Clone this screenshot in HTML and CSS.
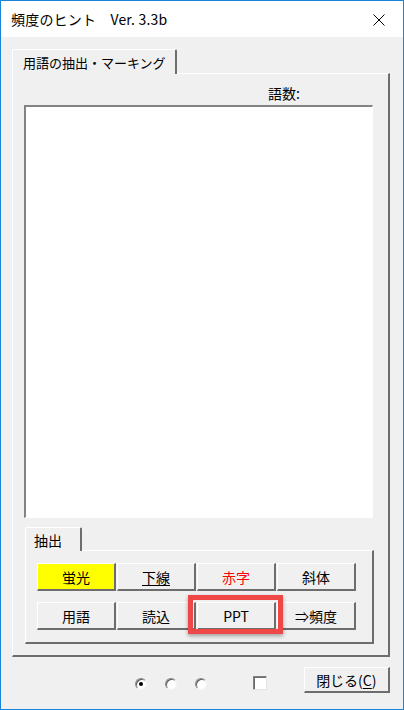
FILE: index.html
```html
<!DOCTYPE html>
<html lang="ja">

<head>
    <meta charset="UTF-8">
    <meta name="viewport" content="width=device-width, initial-scale=1.0">
    <title>頻度のヒント</title>
    <link rel="stylesheet" href="styles.css">
</head>

<body>

    <div class="window">
        <div class="titlebar">
            <span class="title">頻度のヒント　Ver. 3.3b</span>
            <span class="close">
                <svg width="12" height="12" viewBox="0 0 12 12">
                    <path d="M0.5 0.5 L11.5 11.5 M11.5 0.5 L0.5 11.5" stroke="#000" stroke-width="1" fill="none" />
                </svg>
            </span>
        </div>

        <div class="client">
            <div class="tabctl">
                <div class="tabs">
                    <div class="tab tab-main">用語の抽出・マーキング</div>
                </div>
                <div class="panel panel-main">
                    <div class="count">語数:</div>
                    <div class="listbox"></div>

                    <div class="tabctl tabctl-inner">
                        <div class="tabs">
                            <div class="tab tab-sub">抽出</div>
                        </div>
                        <div class="panel panel-sub">
                            <div class="btn-grid">
                                <div class="btn btn-yellow">蛍光</div>
                                <div class="btn"><u>下線</u></div>
                                <div class="btn btn-red">赤字</div>
                                <div class="btn">斜体</div>
                                <div class="btn">用語</div>
                                <div class="btn">読込</div>
                                <div class="btn btn-marked">PPT</div>
                                <div class="btn">⇒頻度</div>
                            </div>
                        </div>
                    </div>
                </div>
            </div>

            <div class="footer">
                <span class="radio checked"></span>
                <span class="radio"></span>
                <span class="radio"></span>
                <span class="checkbox"></span>
                <div class="btn btn-close">閉じる(<u>C</u>)</div>
            </div>
        </div>
    </div>

</body>

</html>
```

FILE: styles.css
```css
/* Base */
body {
    margin: 0;
    padding: 0;
    background: #f0f0f0;
    font-family: "Noto Sans CJK JP", "Noto Sans", sans-serif;
    font-size: 13px;
    color: #000;
}

.window {
    width: 404px;
    height: 710px;
    box-sizing: border-box;
    border: 1px solid #1883d7;
    background: #f0f0f0;
    display: flex;
    flex-direction: column;
}

.titlebar {
    height: 36px;
    background: #fff;
    display: flex;
    align-items: center;
    justify-content: space-between;
    padding: 0 18px 0 10px;
}

.title {
    font-size: 14px;
    letter-spacing: 0.2px;
}

.close {
    display: flex;
    margin-top: 2px;
}

.client {
    flex: 1;
    padding: 12px 13px 0 11px;
    display: flex;
    flex-direction: column;
}

/* Tab controls */
.tabs {
    display: flex;
}

.tab {
    position: relative;
    z-index: 1;
    background: #f0f0f0;
    margin-bottom: -1px;
    border-top: 1px solid #fff;
    border-left: 1px solid #fff;
    border-right: 2px solid #6d6d6d;
    box-sizing: border-box;
    display: flex;
    align-items: center;
    border-radius: 2px 2px 0 0;
}

.tab-main {
    width: 165px;
    height: 25px;
    padding-left: 10px;
}

.tab-sub {
    width: 57px;
    height: 24px;
    padding-left: 8px;
    font-size: 14px;
}

.panel {
    box-sizing: border-box;
    border-top: 1px solid #fff;
    border-left: 1px solid #fff;
    border-right: 2px solid #6d6d6d;
    border-bottom: 2px solid #6d6d6d;
}

.panel-main {
    width: 378px;
    height: 584px;
    padding: 0 15px 0 11px;
}

.count {
    height: 31px;
    box-sizing: border-box;
    padding: 10px 73px 0 0;
    line-height: 18px;
    text-align: right;
    font-size: 14px;
}

.listbox {
    height: 413px;
    box-sizing: border-box;
    background: #fff;
    border-top: 2px solid #838383;
    border-left: 2px solid #838383;
    border-right: 1px solid #fff;
    border-bottom: 1px solid #fff;
}

.tabctl-inner {
    margin: 9px 0 0 1px;
}

.panel-sub {
    width: 349px;
    height: 94px;
    padding: 12px 0 0 11px;
}

.btn-grid {
    display: grid;
    grid-template-columns: repeat(4, 79px);
    grid-auto-rows: 28px;
    column-gap: 1px;
    row-gap: 11px;
}

/* Buttons */
.btn {
    box-sizing: border-box;
    background: #f0f0f0;
    border-top: 1px solid #fff;
    border-left: 1px solid #fff;
    border-right: 2px solid #6d6d6d;
    border-bottom: 2px solid #6d6d6d;
    display: flex;
    align-items: center;
    justify-content: center;
    white-space: nowrap;
    font-size: 14px;
}

.btn u {
    text-underline-offset: 2px;
}

.btn-yellow {
    background: #ffff00;
}

.btn-red {
    color: #ff0000;
}

.btn-marked {
    position: relative;
}

.btn-marked::after {
    content: "";
    position: absolute;
    top: -8px;
    left: -10px;
    right: -9px;
    bottom: -6px;
    border: 5px solid #ef4646;
    box-shadow: 0 2px 4px rgba(0, 0, 0, 0.35);
    pointer-events: none;
}

/* Footer */
.footer {
    height: 52px;
    display: flex;
    align-items: center;
    padding-left: 123px;
}

.radio {
    width: 12px;
    height: 12px;
    box-sizing: border-box;
    border-radius: 50%;
    background: #fff;
    border: 1px solid;
    border-color: #8a8a8a #f4f4f4 #f4f4f4 #8a8a8a;
    box-shadow: inset 1px 1px 0 #5a5a5a;
    margin-right: 18px;
    margin-top: 1px;
    display: flex;
    align-items: center;
    justify-content: center;
}

.radio.checked::before {
    content: "";
    width: 4px;
    height: 4px;
    border-radius: 50%;
    background: #000;
}

.checkbox {
    width: 14px;
    height: 14px;
    box-sizing: border-box;
    background: #fff;
    border-top: 1px solid #808080;
    border-left: 1px solid #808080;
    border-right: 1px solid #e3e3e3;
    border-bottom: 1px solid #e3e3e3;
    box-shadow: inset 1px 1px 0 #6a6a6a;
    margin-left: 28px;
}

.btn-close {
    width: 87px;
    height: 26px;
    margin-left: 37px;
    margin-bottom: 6px;
}
```
